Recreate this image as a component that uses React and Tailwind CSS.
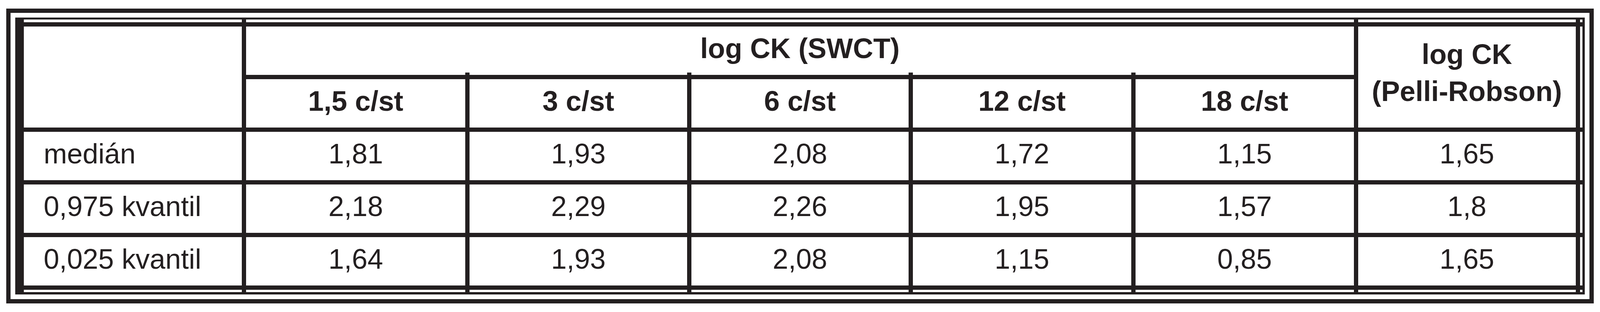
import React from 'react';

const freqs = ['1,5 c/st', '3 c/st', '6 c/st', '12 c/st', '18 c/st'];

const rows = [
  { label: 'medián', swct: ['1,81', '1,93', '2,08', '1,72', '1,15'], pelli: '1,65' },
  { label: '0,975 kvantil', swct: ['2,18', '2,29', '2,26', '1,95', '1,57'], pelli: '1,8' },
  { label: '0,025 kvantil', swct: ['1,64', '1,93', '2,08', '1,15', '0,85'], pelli: '1,65' },
];

const Cell = ({ className = '', children }) => (
  <div className={`bg-white flex items-center justify-center pb-[12px] leading-[95px] whitespace-nowrap ${className}`}>{children}</div>
);

export default function App() {
  return (
    <div className="bg-white w-full h-[800px] font-['Liberation_Sans',Arial,sans-serif] text-[calc(35px+0.9vw)] text-[#231f20] px-[0.397%] pt-[22px]">
      {/* outer frame */}
      <div className="border-[11px] border-[#231f20] p-[12px] bg-white">
        {/* table with double border */}
        <div className="border-solid border-[#231f20] border-t-[5px] border-r-[6px] border-b-[6px] border-l-[22px] bg-white">
          <div className="grid bg-[#231f20] gap-[11px] grid-cols-[762fr_767fr_760fr_760fr_763fr_764fr_761fr_6px] grid-rows-[7px_124px_124px_124px_124px_124px_6px]">
            {/* top white strip */}
            <div className="bg-white" />
            <div className="bg-white col-span-5" />
            <div className="bg-white" />
            <div className="bg-white" />

            {/* header row 1 */}
            <div className="bg-white row-span-2" />
            <Cell className="col-span-5 font-bold">log CK (SWCT)</Cell>
            <div className="bg-white row-span-2 flex flex-col items-center justify-center pb-[22px] leading-[95px] font-bold text-center whitespace-nowrap">
              <span>log CK</span>
              <span>(Pelli-Robson)</span>
            </div>
            <div className="bg-white row-span-2" />

            {/* header row 2 */}
            {freqs.map((f, i) => (
              <Cell key={f} className="relative font-bold">
                {i > 0 && <span className="absolute -left-[11px] -top-[17px] w-[11px] h-[6px] bg-[#231f20]" />}
                {f}
              </Cell>
            ))}

            {/* data rows */}
            {rows.map((r) => (
              <React.Fragment key={r.label}>
                <Cell className="justify-start pl-[1.23vw]">{r.label}</Cell>
                {r.swct.map((v, i) => (
                  <Cell key={i}>{v}</Cell>
                ))}
                <Cell>{r.pelli}</Cell>
                <div className="bg-white" />
              </React.Fragment>
            ))}

            {/* bottom white strip */}
            {Array.from({ length: 8 }).map((_, i) => (
              <div key={i} className="bg-white" />
            ))}
          </div>
        </div>
      </div>
    </div>
  );
}
